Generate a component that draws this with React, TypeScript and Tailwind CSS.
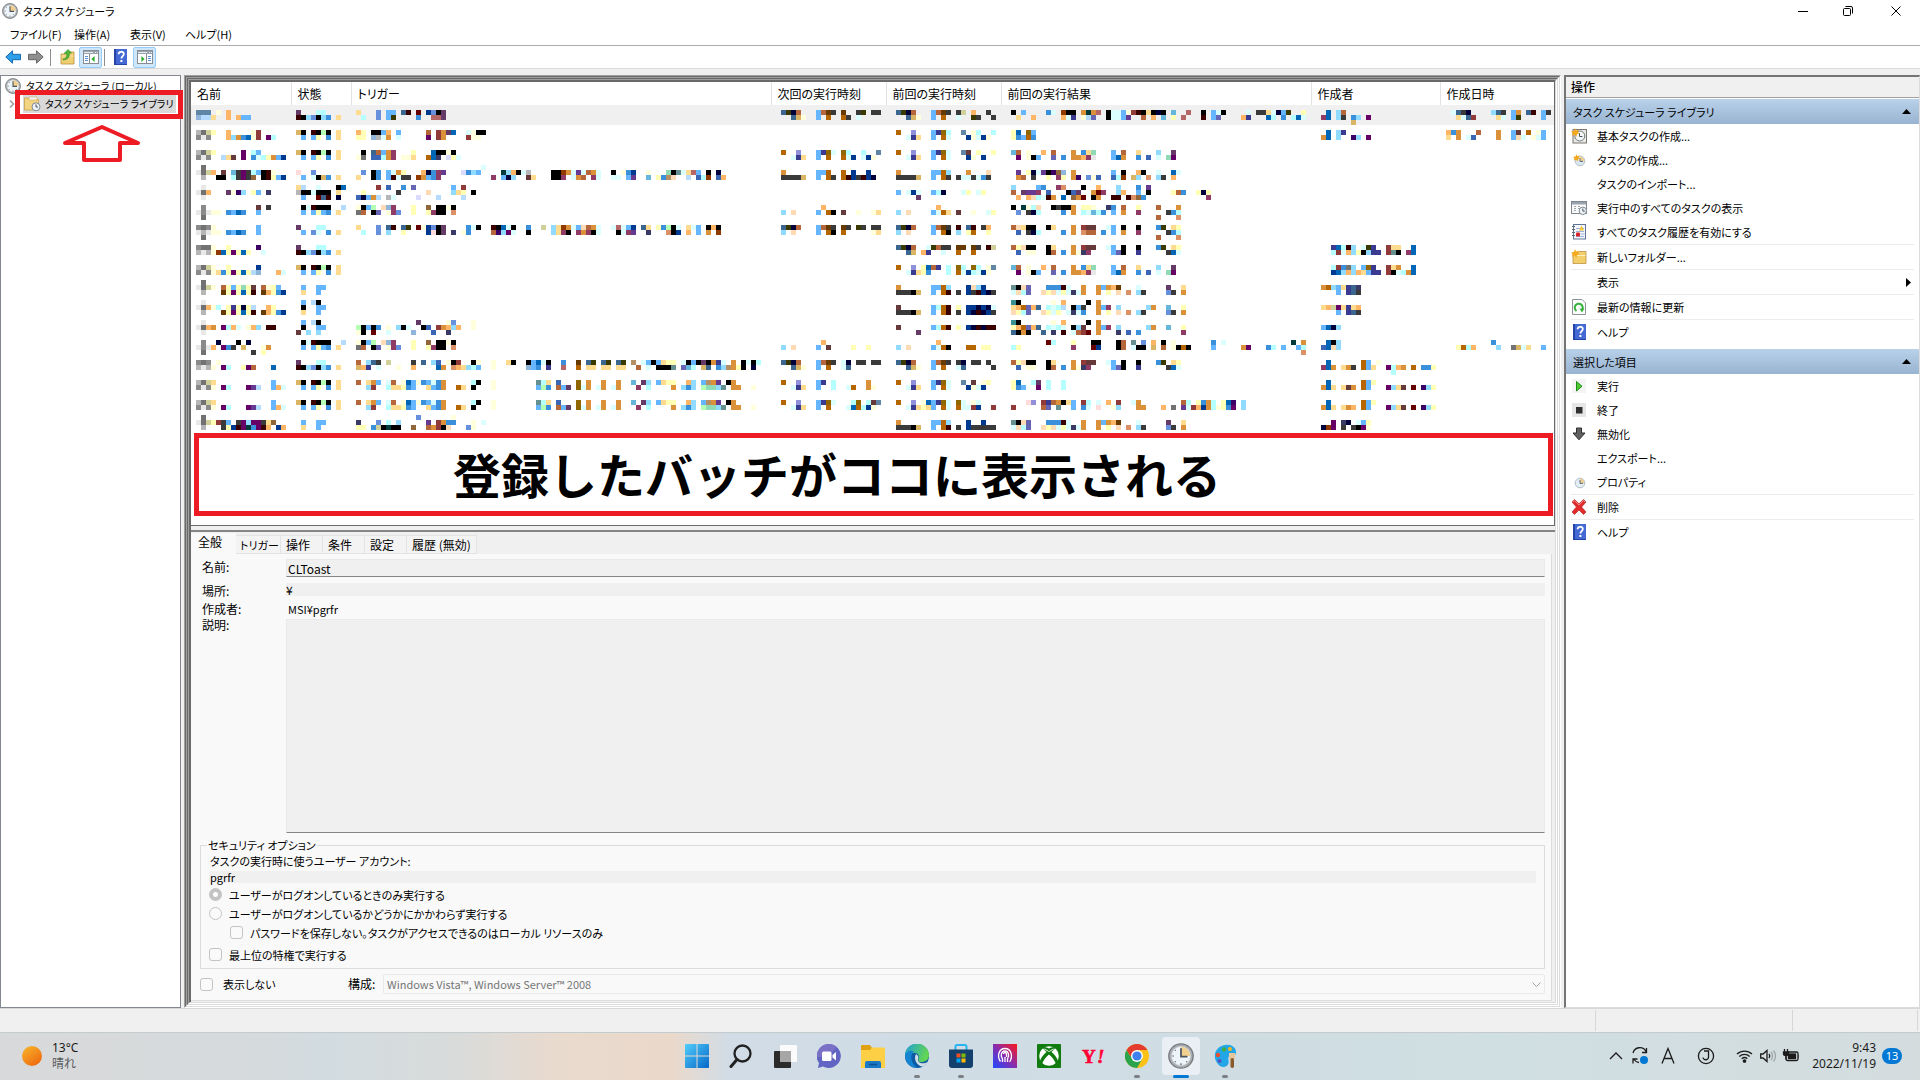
import React from "react";

const PALETTE: Record<string, string> = {
  k: "#000000", d: "#3a3a3a", g: "#727272", m: "#b6b6b6", n: "#8a8a8a", w: "#e8e8e8",
  y: "#ffffb5", l: "#ffffdb", c: "#b5ffff", C: "#dbffff", s: "#66b5ff", S: "#90dbff",
  b: "#3a90db", B: "#0066b5", N: "#003a90", D: "#00003a", t: "#ffdb90", o: "#ffb566",
  O: "#db903a", r: "#b5663a", R: "#903a3a", M: "#3a0000", p: "#660066", P: "#663a66",
  v: "#3a3a90", V: "#9090db", u: "#6690db", U: "#6666b5", h: "#3a66b5", H: "#3a6690",
  q: "#b56600", Q: "#663a00", e: "#90663a", E: "#db9066", f: "#ffdbb5", F: "#b5dbff",
  a: "#903a66", A: "#3a0066", z: "#3a3a66", i: "#003a3a", j: "#b5ffb5", G: "#3a3a00",
  J: "#906600", x: "#663a3a", X: "#660000", Z: "#3a9090", K: "#ffdbdb", L: "#b59066",
  W: "#6085a5", "0": "#663a90", "1": "#669090", "2": "#90dbb5", "3": "#66b5db",
  "4": "#dbb566", "5": "#d0d09a", "6": "#903a00", "7": "#b56666", "8": "#90b5db", "9": "#dbdbff",
};

const CELL = 5;

function Mosaic({ lines }: { lines: string[] }) {
  const cols = Math.max(0, ...lines.map((l) => l.length));
  if (!cols) return null;
  return (
    <svg
      className="block"
      width={cols * CELL}
      height={lines.length * CELL}
      shapeRendering="crispEdges"
      aria-hidden="true"
    >
      {lines.map((line, y) =>
        [...line].map((ch, x) =>
          PALETTE[ch] ? (
            <rect key={`${x}-${y}`} x={x * CELL} y={y * CELL} width={CELL} height={CELL} fill={PALETTE[ch]} />
          ) : null
        )
      )}
    </svg>
  );
}

type Row = {
  short?: boolean;
  cells: string[][];
};

const ST_READY = ["P...cc", "MkSukSb.t"];
const ST_RUN = ["4k.Mkjk.t", ".s.sy.b.t"];
const ST_OFF = ["", ".s..ss", ".t..s"];
const ST_OFF2 = [".s.Fk", ".k..ss", ".t..s"];
const ST_SET = [".kCMkkk..F", ".s.sysb.t"];
const TR_SHORT = ["lksj.f8a...y..e.kklk", "gr.kU.lau..y..yakk.E"];
const TR_LONG = [
  "r.tOs.Cr.lBslbsCbO.....ck..l........1ct.h...J.O..O..O..3.PS.styy..oS.sLO0.kO",
  "..SR..cttybs..tsbO..qt.k...l........sjb.rsP.JCO.CO.CO...a.c....O.SbS.j22S1.OO..l",
];
const RES_A = [
  "3r.l..o.r...O.bt2...s.r..t...S..P",
  ".p.lks..U.b.OOoaw...sBO..b.h.C.2p",
];
const RES_B = [
  "ryfkk..kt...O.Rxx..Cs.k..k...bG.ty",
  ".h.ll..kr.b.Olza....sUk..v.....dBC",
];
const RES_C = [
  "",
  "1kfU...bbbMC..O..OsOoQ...C.....P..t",
  "CfcU..fyfCyCzCO..O.y.f.E.Sd....ud.O",
];

const ROWS: Row[] = [
  {
    cells: [
      ["", "WWW.l.o", "8FFt..o.oss"],
      ["", ...ST_READY],
      ["", "t...u.ss.HM.X.NukP", ".c..u.sG....b..77P"],
      ["", "HGDr...srQd.Q..dG.dd", "..H4l..s.q..qd.C"],
      ["", "HGDr...srQd.d5.o..d", "..H4l..s.q..C..Gd..d"],
      [
        "",
        "k.s....bC.6kk.OiO7.kCCslRMktkDk.3..7..k.sCk....C.ddtCDsG..y",
        ".t..o.....oCv.lFU..kCCs0..r.o.3.y.7...M.sU....ov...Bc.b.cBC",
      ],
      ["", ".B.Sr", "aB.Sd.bS.p", "......4"],
      ["", ".CHdD....SHd.sO.HM.sd", "..tCHR....tC.sG....s"],
    ],
  },
  {
    cells: [
      ["", "mg5y..o....lR", "nwn...oSObBlR.pc"],
      ["", ...ST_RUN],
      ["", "oy.kkso.s.....r.ROPB..Clkk", "yy.8mCO.C.....p.RO....Rll"],
      [],
      ["", "q..V...svJc..W.lc..c", "..Cvt..s.qC...NlCNl"],
      ["", "yB.Js", "ybsqb"],
      ["", ".B.Sv", "OB.S..AS.p"],
      ["", "obO...r...O..sx.q.ls", "t.O.Ch....O..sfC.lCs"],
    ],
  },
  {
    cells: [
      ["", "mg5y.....p.cs", "nwn..Ftx.p.bCcyOsN"],
      ["", ...ST_RUN],
      ["", ".k.HrsOa...y...Bkklk", "lg.hhcOa.llt..qBz.9yC"],
      ["", "q..V...svJC.Jc..c..W", "..Cvt..s.q..qCN.CNl"],
      ["", "q..V...svJC..Wx.y..y", "..Cvt..s.qC...Nl.N"],
      ["", ...RES_A],
      [],
      [],
    ],
  },
  {
    cells: [
      [".g", "wg5o.x.3dpdcskMl", ".m..kk.cdpde.kMysN"],
      ["", "K..u", ".s.Ck4b.t"],
      [
        ".........................C",
        ".u.kb.sCOy...oDba0...9bSs....iSokCm....kk6OC0CrOC..k.lbN..l...2k1Ct7s.k.D",
        "t..kb.sMCdd.6Osba..........a.sDS..xt...kka.COr.aC..CC.s0..3.ybLf..F.hc6.ho",
      ],
      ["", "O......ssq..q.N..N", "dddd4..s.qd.qMNdMND"],
      ["", "O......ssqS...O...f", "dddd4..s.qd.dCCdCbd"],
      ["", ".0.yDC0kAe8.O.......s.k..ok..C..BC", ".Or.d..y.ay.OA.ulh..hc6.4S.E.Sd.o"],
      [],
      [],
    ],
  },
  {
    cells: [
      [".w", "wgo...PlAS.ys.z", ".w"],
      ["tF..C...kB", "mkkCkkk.t", ".s..XHM.D"],
      ["....R.h..b.U.......s.R", ".y......d.....f....Sty.k", "hDsOF.mC....9...F....F"],
      [],
      ["", "s.CNC..scD...Cy.Cy", "....P"],
      ["S....sb..aE...k..o...S...b.0", "r.P00a.h...khP..OXa..So..s.k....yrb..yDy", ".o.ofcCMO.B.eOX.kO..MM.MEeb............a"],
      [],
      [],
    ],
  },
  {
    cells: [
      [".n..........x.d", "wnwll.bsBb..s", ".g"],
      ST_SET,
      TR_SHORT,
      ["........o", "S.f....s.qk.x..l..lt"],
      ["........o", "S.f....sCqt.x..l..Cy"],
      [
        "k.ilcf..kdkkO.yyl..zb.r..y...r...O",
        ".u.dDc....b.O.cC3cb.s.O..a.....dbc",
        ".............................r...E",
      ],
      [],
      [],
    ],
  },
  {
    cells: [
      ["ngnl........s", "wmwll.bsBb..s", ".g"],
      ["P...cc", ".s.uC.b.t"],
      [
        "t...u.HM.HG.XlNukP....bCk..MkBCk..b..5.St6OCsfrOC..C7CsN.Ht.ybjkC.tCs.kok",
        ".c..u.S..y....NKkP.z.lb....rASpC..k....Stak.aOakC...kCa0..z...EkN.o.s.O.6",
      ],
      ["HGDr...srQd.Qd.Gd.dd", "S.f....s.qk.q.....lt"],
      ["HGDr...srQd.M.HM.do", "S.f....s.qk.S.yq..y"],
      [
        "rftkk..kt...O.Rxx..Cs.k..k...bG.ty",
        ".h.dDc....b.O.Err.b.s.O..a.....dbc",
        ".............................r...E",
      ],
      [],
      [],
    ],
  },
  {
    cells: [
      ["nggl..y.....A", "mwml6BypyBy..C"],
      ST_READY,
      [],
      [],
      ["HGDr..CGrdd.QQ.Qd.M5", "..H4.ov..C..q..q"],
      RES_B,
      ["..vBcMS.CGv..Rtt..B", "..cRCoSykSvv.R1k.aB"],
      [],
    ],
  },
  {
    short: true,
    cells: [
      ["mg5l..y.....N", "nwnltbypyByF8...oC"],
      ST_RUN,
      [],
      [],
      ["q..V.yBrv.c.Jc.Jc.lW", "..Cvtyb...c.qCNcCNl"],
      RES_A,
      ["..cRbgS.sJv..RtO..B", "..NBSoSotsvv.RkCcOB"],
      [],
    ],
  },
  {
    cells: [
      [".g", "wg5l.rysy2yx.rlys", ".m...QypyByM.QoybN"],
      ST_OFF,
      [],
      [],
      ["", "O......ssqS...NfSN", "dddk4..s.qM.d.NdMNDd"],
      RES_C,
      ["", "OqSstvHz", "...s.vHd"],
      [],
    ],
  },
  {
    cells: [
      [".w", "wgolc.yvyDyF..oy", ".m...QypyByM.QoybN"],
      ST_OFF2,
      [],
      [],
      ["", "x......scqM.y.NNDNDC", "dddk4..s.qM.d.NDMDNd"],
      [
        "Zk......l.o....k.O",
        "toqUoH.cCcF.ksd..Osa.S.....SO..3..y",
        "fycU..fyCy.CzCb..O.y.f.E.Sd....ud.O",
      ],
      ["", "to5ptvto", "...s.vHd"],
      [],
    ],
  },
  {
    cells: [
      [".w", "wgoO.pcoC.loS.MM", ".w"],
      [".s.Fk", ".k..ss", "x.S.S"],
      ["............P.....lu...l", "jkskb.l.SkC..kh.ROoSo..l", "lk.X..C....8...h..z"],
      [],
      ["", "x......scqM.y.NDMDMM", "....P"],
      [
        "Zk......l.o....k.O",
        "yoqUoH.cCcC.kSx..Osa.S.....SO..3..y",
        "HkOk..H.z.M.CrRX.O...z.h.b........a",
      ],
      ["", "sBDS"],
      [],
    ],
  },
  {
    cells: [
      [".n..D...k.D", "wnwo.pbd.4...lO", ".g.........d.y"],
      ST_SET,
      TR_SHORT,
      ["........o", "S.f....s.x....y..y"],
      ["........o", "S.f....sCqk...qq.yy"],
      [
        ".......Xc...y...kk...kr.1.u.o.k.l.......b.C.............i.O",
        "cy..........a...XN...kr.Ckk.4.r.lkqk....s.....Op...bc.s..sc",
        "..........................................................E",
      ],
      [".BkS", "hBfS"],
      [".........b", "..yqco....S..g4Ct..s"],
    ],
  },
  {
    cells: [
      ["ngn.l", "mwml.pc..ypr...B"],
      ST_READY,
      [
        "r.SHd.5....d.H.Sh.lkR..kl..l..tk..ksBCk..b..Q.HG.HG.HG.L.Cskstyy.CkskPkOvC.O.kCkc",
        "4ov.C...l..o....BO.EotScs..l......8sb.v..7..q.tt.tt.tt..r.C.kkk1.U3c.4H.bSLOyk.D",
      ],
      ["HGDr...srQd.CD.dd.dd", "..H4l..s.q..CH"],
      ["HGDr...srQd.dD.dd.d", "..H4l..s.q..CH.....d"],
      RES_B,
      [".B......qs.l", "aBO.tOd.qst..pcoO.q.bby", "..............c"],
      [],
    ],
  },
  {
    cells: [
      ["mg5t...........s", "nwnl.pc...p0F..soC"],
      ST_RUN,
      TR_LONG,
      ["q..V...sv.c......O", "..Cvt..s..c..Cq..Ol"],
      ["q..V...svJC..W.x.ly", "..Cvt..s.qC...NlCN"],
      ["yB..cP.c..c", "ybs..p.c..c"],
      [".B......qsy", "OBt.txO.qs...pStx.X.ASy"],
      [],
    ],
  },
  {
    short: true,
    cells: [
      ["mg5t...........s", "nwnl.pc...p0F..soC"],
      ST_RUN,
      TR_LONG,
      ["q..V...svJC...cJ.cxW", "..Cvt..s.q...CBqcNl"],
      ["q..V.lBsvJC.JC.lC", "..Cvtyts.qC.qCCRN..R"],
      [
        "...KV.RvrOkts.Rc.C.o.R..CO........rc.ybOc.yBA.S",
        "R.....rU.1..s.bC.K..lS...OO...o.g.0CRoNOclybp.S",
      ],
      [".B......qsy", "OBt.tOo.qs...pStx.X.ASy"],
      [],
    ],
  },
  {
    short: true,
    cells: [
      [".g", "wg5yRds.dpSppdte", ".m...dyNMpibpMo.No"],
      ST_OFF,
      ["............u......l", "z...u.c.S.....0.RObb...l.C", "yy.b5kikk..e..rORkf...ul"],
      [],
      ["", "O......ssqS...N..N", "dddk4..s.qM.d.Nddddd"],
      RES_C,
      ["", "..p.zD.Csy", "D6p.d.dkpl"],
      [],
    ],
  },
];

const COLUMNS = [
  { label: "名前", width: "w-[100px]", pad: "pl-[5px]" },
  { label: "状態", width: "w-[60px]", pad: "pl-[5px]" },
  { label: "トリガー", width: "w-[420px]", pad: "pl-[5px]" },
  { label: "次回の実行時刻", width: "w-[115px]", pad: "pl-[10px]" },
  { label: "前回の実行時刻", width: "w-[115px]", pad: "pl-[10px]" },
  { label: "前回の実行結果", width: "w-[310px]", pad: "pl-[10px]" },
  { label: "作成者", width: "w-[129px]", pad: "pl-[10px]" },
  { label: "作成日時", width: "", pad: "pl-[6px]" },
];

function Clock({ size }: { size: number }) {
  return (
    <svg width={size} height={size} viewBox="0 0 16 16" aria-hidden="true" className="shrink-0">
      <circle cx="8" cy="8" r="7.5" fill="#a9adb1" stroke="#77797c" strokeWidth=".8" />
      <circle cx="8" cy="8" r="5.9" fill="#eef5fa" stroke="#c9ced2" strokeWidth=".5" />
      <path d="M8 8V2.3A5.7 5.7 0 0 1 13.7 8Z" fill="#f1cf8d" />
      <path d="M8 3.2V8.4H12" fill="none" stroke="#4b5560" strokeWidth="1.1" />
      <g fill="#56616b">
        <circle cx="8" cy="13" r=".5" />
        <circle cx="3.1" cy="8" r=".5" />
        <circle cx="4.5" cy="4.5" r=".4" />
        <circle cx="4.5" cy="11.5" r=".4" />
        <circle cx="11.5" cy="11.5" r=".4" />
      </g>
    </svg>
  );
}

function HelpIcon() {
  return (
    <svg width="13" height="16" viewBox="0 0 13 16" aria-hidden="true">
      <rect width="13" height="16" fill="#2444a8" />
      <rect x="2" width="11" height="15" fill="#4468d4" />
      <path d="M4.6 5.2C4.6 2 9.8 2 9.8 5c0 2-2.4 2.2-2.4 4.6" fill="none" stroke="#fff" strokeWidth="1.8" />
      <rect x="6.4" y="11" width="2" height="2" fill="#fff" />
    </svg>
  );
}

function PaneIcon({ flip }: { flip?: boolean }) {
  return (
    <svg width="16" height="14" viewBox="0 0 16 14" aria-hidden="true">
      <rect x=".5" y=".5" width="15" height="13" fill="#fff" stroke="#868d95" />
      <rect x="1" y="1" width="14" height="3" fill="#9aa3ad" />
      <path d="M1 2.5h9M12 2.5h1M14 2.5h1" stroke="#e8edf2" />
      <g transform={flip ? "translate(16 0) scale(-1 1)" : undefined}>
        <path d="M6.5 4v9" stroke="#868d95" />
        <path d="M2 6.5h3M2 8.5h3M2 10.5h3" stroke="#5b8fd0" />
        <path d="M11.6 6v6L8.4 9Z" fill="#2cae2c" />
      </g>
    </svg>
  );
}

function Star() {
  return <path d="M4 0l1 2.6L8 1.6 6.6 4 9 5.6 6 6 5.4 9 3.6 6.6 1 8l.6-3L0 3.6 3 3Z" fill="#f5a81c" />;
}

function FolderUp() {
  return (
    <svg width="15" height="16" viewBox="0 0 15 16" aria-hidden="true">
      <path d="M1 5h5l1-2h7v12H1Z" fill="#f0cf72" stroke="#b98f3a" strokeWidth=".8" />
      <path d="M1.5 7h12" stroke="#fbe7a8" />
      <path d="M3 10C6.5 9.5 7 7 6.6 4.4H4L8 .5 11.6 4H9.4C9.7 8 8 11 3 11Z" fill="#52b53a" stroke="#2d8620" strokeWidth=".5" />
    </svg>
  );
}

function SmallIcon({ name }: { name: string }) {
  switch (name) {
    case "basic":
      return (
        <svg width="16" height="16" viewBox="0 0 16 16" aria-hidden="true">
          <rect x="2" y="1.5" width="13.5" height="13.5" fill="#e9e9e6" stroke="#7d7670" />
          <circle cx="8.8" cy="8" r="5" fill="#f4f6f7" stroke="#707a82" />
          <path d="M8.5 5v3.5h3" fill="none" stroke="#4a5560" />
          <Star />
        </svg>
      );
    case "create":
      return (
        <svg width="16" height="16" viewBox="0 0 16 16" aria-hidden="true">
          <circle cx="9" cy="9" r="4.8" fill="#dbe9f2" stroke="#b3c1cc" />
          <path d="M9 9V4.6A4.4 4.4 0 0 1 13.4 9Z" fill="#efcf92" />
          <path d="M9 6.500V9.400h3" fill="none" stroke="#5a6a78" />
          <g transform="translate(2 2) scale(.85)"><Star /></g>
        </svg>
      );
    case "running":
      return (
        <svg width="16" height="16" viewBox="0 0 16 16" aria-hidden="true">
          <rect x=".5" y="1.5" width="15" height="12" fill="#fafafa" stroke="#7f8790" />
          <rect x="1" y="2" width="14" height="2.5" fill="#98a3af" />
          <path d="M3 6.5h2M7 6.5h2M3 8.5h2M7 8.5h2M3 10.5h2" stroke="#a0a7af" />
          <circle cx="11.8" cy="10.8" r="3.7" fill="#eef4f7" stroke="#808b94" />
          <path d="M11.8 8.5v2.600h2" fill="none" stroke="#4d5862" />
        </svg>
      );
    case "history":
      return (
        <svg width="16" height="16" viewBox="0 0 16 16" aria-hidden="true">
          <rect x="2.5" y=".5" width="12" height="14.5" fill="#f4f6fa" stroke="#5f7597" />
          <path d="M5 4.5h8M5 7.5h8M5 12.5h8M9.500 10h4" stroke="#9db2dc" />
          <path d="M10.500 1.500l2.500 5H8Z" fill="#f2c531" />
          <rect x="5" y="8.500" width="4" height="4" rx="1" fill="#d8232a" />
          <path d="M1 2.5h3M1 5.5h3M1 8.5h3M1 11.5h3" stroke="#5c6775" />
        </svg>
      );
    case "folder":
      return (
        <svg width="16" height="16" viewBox="0 0 16 16" aria-hidden="true">
          <path d="M2 4h5l1-1.500h7V14.500H2Z" fill="#f3cf6b" stroke="#bd9340" strokeWidth=".8" />
          <path d="M2.500 6.500h12" stroke="#fdeebb" />
          <Star />
        </svg>
      );
    case "refresh":
      return (
        <svg width="14" height="16" viewBox="0 0 14 16" aria-hidden="true">
          <path d="M.5.5h9.5L13.5 4v11.500H.5Z" fill="#fcfcfc" stroke="#8e9399" />
          <path d="M4.500 12A4 4 0 1 1 10 11" fill="none" stroke="#36b13c" strokeWidth="2" />
          <path d="M7.500 9.500h5l-2.500 4Z" fill="#36b13c" />
        </svg>
      );
    case "help":
      return <HelpIcon />;
    case "run":
      return (
        <svg width="14" height="14" viewBox="0 0 14 14" aria-hidden="true">
          <rect width="14" height="14" fill="#f4f4f4" />
          <path d="M4.500 2.500v9.500l5.500-4.700Z" fill="#4fca35" stroke="#1d8f14" />
        </svg>
      );
    case "end":
      return (
        <svg width="14" height="14" viewBox="0 0 14 14" aria-hidden="true">
          <rect width="14" height="14" fill="#e6e6e6" />
          <rect x="4" y="4" width="6.500" height="6.500" fill="#2f2f2f" />
        </svg>
      );
    case "disable":
      return (
        <svg width="14" height="14" viewBox="0 0 14 14" aria-hidden="true">
          <path d="M4.500 1h5v5h3.500L7 12.800 1 6h3.500Z" fill="#606060" stroke="#2e2e2e" />
        </svg>
      );
    case "props":
      return (
        <svg width="16" height="16" viewBox="0 0 16 16" aria-hidden="true">
          <circle cx="9" cy="9" r="4.8" fill="#e4eef5" stroke="#b0bec9" />
          <path d="M9 9V4.6A4.4 4.4 0 0 1 13.4 9Z" fill="#efcf92" />
          <path d="M9 6V9.400h3" fill="none" stroke="#5a6a78" />
        </svg>
      );
    case "delete":
      return (
        <svg width="16" height="16" viewBox="0 0 16 16" aria-hidden="true">
          <path d="M1 3l2.500-2.500L8 4.800 12.500.5 15 3l-4.400 5L15 13l-2.500 2.500L8 11l-4.500 4.500L1 13l4.400-5Z" fill="#e22b2b" stroke="#b01c1c" strokeWidth=".6" />
          <path d="M2 3l1.500-1.400L8 6l4.500-4.400L14 3" fill="none" stroke="#f28a8a" />
        </svg>
      );
    default:
      return null;
  }
}

function ActionHeader({ children }: { children: React.ReactNode }) {
  return (
    <div className="flex h-[25px] items-center justify-between bg-linear-to-b from-[#b9d1ea] to-[#99b4d1] pr-2 pl-[7px]">
      <h3>{children}</h3>
      <button type="button" aria-label="折りたたむ">
        <svg width="9" height="5" viewBox="0 0 9 5"><path d="M4.5 0L9 5H0Z" /></svg>
      </button>
    </div>
  );
}

function Action({ icon, label, line, sub }: { icon?: string; label: string; line?: boolean; sub?: boolean }) {
  return (
    <li className={line ? "mx-[5px] border-t border-[#ececec]" : "mx-[5px]"}>
      <button type="button" className="flex h-6 w-full items-center text-left">
        <span className="flex w-4 justify-center">{icon && <SmallIcon name={icon} />}</span>
        <span className="grow pl-[10px]">{label}</span>
        {sub && <svg className="mr-[3px]" width="5" height="9" viewBox="0 0 5 9"><path d="M0 0L5 4.5 0 9Z" /></svg>}
      </button>
    </li>
  );
}

const TASKS: { name: string; state?: "open" | "active"; art: React.ReactNode }[] = [
  {
    name: "スタート",
    art: (
      <>
        <defs>
          <linearGradient id="win" x1="0" y1="0" x2="1" y2="1"><stop stopColor="#52cdfb" /><stop offset="1" stopColor="#0467c8" /></linearGradient>
        </defs>
        <path d="M1 0h10.500v11.500H0V1Q0 0 1 0ZM12.500 0H23q1 0 1 1v10.500H12.500ZM0 12.500h11.500V24H1q-1 0-1-1ZM12.500 12.500H24V23q0 1-1 1H12.500Z" fill="url(#win)" />
      </>
    ),
  },
  {
    name: "検索",
    art: <g fill="none" stroke="#222"><circle cx="13.5" cy="9.5" r="8" strokeWidth="2.3" /><path d="M8 15.500L2 22.500" strokeWidth="3" strokeLinecap="round" /></g>,
  },
  {
    name: "タスク ビュー",
    art: <><rect x="7" y="1" width="17" height="17" rx="1" fill="#fbfbfb" /><rect x="1" y="7" width="17" height="17" rx="1" fill="#2b2b2b" /><rect x="7" y="7" width="11" height="11" fill="#a6a6a6" /></>,
  },
  {
    name: "チャット",
    art: (
      <>
        <path d="M12 0a12 12 0 1 1-6 22.500L1 24l1-5A12 12 0 0 1 12 0Z" fill="#6264c4" />
        <path d="M12 0A12 12 0 0 0 0 13Q10 14 20 3A12 12 0 0 0 12 0Z" fill="#8b78c8" opacity=".6" />
        <rect x="5" y="7.5" width="9.5" height="9.5" rx="1.5" fill="#fff" /><path d="M15.500 11l3.500-3v8.500l-3.500-3Z" fill="#fff" />
      </>
    ),
  },
  {
    name: "エクスプローラー",
    art: (
      <>
        <path d="M1 1h8l2 3v4H0V2Q0 1 1 1Z" fill="#dfa012" />
        <path d="M0 6h9l2-2.500h12q1 0 1 1V24H0Z" fill="#fccf45" />
        <path d="M4 24v-5q0-2 2-2h12q2 0 2 2v5Z" fill="#1a78c6" /><path d="M8 20.500h8" stroke="#0e4e8c" strokeWidth="1.5" />
      </>
    ),
  },
  {
    name: "Microsoft Edge",
    state: "open",
    art: (
      <>
        <defs>
          <linearGradient id="edgeTop" x1="0" y1="0" x2="1" y2=".3"><stop stopColor="#1f9fd6" /><stop offset="1" stopColor="#62d653" /></linearGradient>
        </defs>
        <circle cx="12" cy="12" r="12" fill="#0c59a4" />
        <path d="M0 12a12 12 0 0 1 24-1c0 5-4 7-7.500 7-3 0-3.500-1.500-3-3 1-2 .5-6-4-6C5 9 1 11 0 12Z" fill="url(#edgeTop)" />
        <path d="M0 12C1 7 6 6 9 7.500 5 10 5 19 12.500 23.900A12 12 0 0 1 0 12Z" fill="#1484d0" />
        <path d="M13 15c-1 3 4 6 9.500 3-1 2-3 4-5 4.800C11 21 8.500 15 11 10c2 1 3 3 2 5Z" fill="#d2dee6" />
      </>
    ),
  },
  {
    name: "Microsoft Store",
    state: "open",
    art: (
      <>
        <path d="M6.500 6V2.500Q6.500 1 8 1h8q1.500 0 1.500 1.500V6" fill="none" stroke="#28b4ee" strokeWidth="2" />
        <path d="M0 5.500h24V21q0 3-3 3H3q-3 0-3-3Z" fill="#14406e" />
        <rect x="7.5" y="9.5" width="4" height="4" fill="#f25022" /><rect x="12.5" y="9.5" width="4" height="4" fill="#7fba00" />
        <rect x="7.5" y="14.5" width="4" height="4" fill="#00a4ef" /><rect x="12.5" y="14.5" width="4" height="4" fill="#ffb900" />
      </>
    ),
  },
  {
    name: "MSI Center",
    art: (
      <>
        <defs>
          <linearGradient id="msi" x1="0" y1="1" x2="1" y2="0"><stop stopColor="#1b4bff" /><stop offset=".5" stopColor="#8a2cae" /><stop offset="1" stopColor="#ff1616" /></linearGradient>
        </defs>
        <rect width="24" height="24" fill="url(#msi)" />
        <g fill="none" stroke="#fff" strokeWidth="1.3">
          <path d="M7.500 17.500C3.500 12 6 4.500 12 4.500S20.500 12 16.500 18" /><path d="M9.500 18V15C6.500 11 9 7 12 7s5 4 2.500 8v3" /><path d="M12 18v-5M10.500 10a1.500 1.500 0 1 1 3 0v3" />
        </g>
      </>
    ),
  },
  {
    name: "Xbox",
    art: (
      <>
        <rect width="24" height="24" rx="1" fill="#107c10" /><circle cx="12" cy="12" r="9.8" fill="#fff" />
        <path d="M5 4.500C8 4 10.500 6 12 7.300 13.500 6 16 4 19 4.500L17 3Q14 3 12 4.500 10 3 7 3ZM12 10.500C8 14 5.500 17.500 5 20.500L2.500 18C4 13.500 7 10 9.500 8L6 4.500 12 8l6-3.500L14.500 8c2.500 2 5.500 5.500 7 10L19 20.500c-.5-3-3-6.500-7-10Z" fill="#107c10" />
      </>
    ),
  },
  {
    name: "Yahoo!",
    art: (
      <g fill="#ff0033" fontFamily="Liberation Serif, serif" fontWeight="bold" stroke="#ff0033" strokeWidth=".6">
        <text x="1" y="19" fontSize="19">Y</text>
        <text x="16" y="19" fontSize="19" fontStyle="italic">!</text>
      </g>
    ),
  },
  {
    name: "Google Chrome",
    state: "open",
    art: (
      <>
        <circle cx="12" cy="12" r="12" fill="#fbc116" />
        <path d="M1.600 6A12 12 0 0 1 22.400 6H12L7 15Z" fill="#e33b2e" />
        <path d="M1.600 6A12 12 0 0 0 12 24l5.200-9L12 12H5Z" fill="#2ba24c" />
        <circle cx="12" cy="12" r="6" fill="#fff" /><circle cx="12" cy="12" r="4.6" fill="#3f7fee" />
      </>
    ),
  },
  { name: "タスク スケジューラ", state: "active", art: null },
  {
    name: "ペイント",
    state: "open",
    art: (
      <>
        <path d="M12 1C19 0 23.500 4 23 9c-.5 3-4 3-6.500 3.500-3 1 .5 5-1.500 8C12 25 6 23 3.500 18-1 10 4 2 12 1Z" fill="#22a6e8" />
        <circle cx="5" cy="11" r="2.2" fill="#e8502e" /><circle cx="11" cy="5.5" r="2.2" fill="#3fae49" /><circle cx="17" cy="5" r="2" fill="#f3b61d" /><circle cx="6.500" cy="17" r="2" fill="#5c4fc0" />
        <path d="M16 9h6v6h-6Z" fill="#e6c69b" /><rect x="17.500" y="14" width="3.500" height="10" rx="1.700" fill="#8a5a2b" />
      </>
    ),
  },
];

const TABS = ["トリガー", "操作", "条件", "設定", "履歴 (無効)"];

function Bevel({ children }: { children: React.ReactNode }) {
  return (
    <div className="flex min-h-0 min-w-0 flex-1 border border-t-[#a0a0a0] border-r-white border-b-white border-l-[#a0a0a0]">
      <div className="flex min-h-0 min-w-0 flex-1 border border-t-[#696969] border-r-[#dcdcdc] border-b-[#dcdcdc] border-l-[#696969]">
        {children}
      </div>
    </div>
  );
}

const CHECK = "size-[13px] shrink-0 appearance-none rounded-[3px] border border-[#c3c3c3] bg-[#fafafa]";
const RADIO = "size-[13px] shrink-0 appearance-none rounded-full border border-[#c3c3c3] bg-[#fafafa] checked:border-4 checked:bg-white";

function TaskList() {
  return (
    <section className="shrink-0 border-r border-b border-[#696969] bg-white">
      <table className="w-full table-fixed border-collapse">
        <thead>
          <tr className="h-[23px]">
            {COLUMNS.map((c, i) => (
              <th
                key={c.label}
                className={`${c.width} pl-[6px] text-left font-normal ${i < 7 ? "border-r border-[#e2e2e2]" : ""}`}
              >
                {c.label}
              </th>
            ))}
          </tr>
        </thead>
        <tbody>
          {ROWS.map((row, r) => (
            <tr key={r} className={`${row.short ? "h-[15px]" : "h-5"} ${r === 0 ? "bg-[#f0f0f0]" : ""}`}>
              {row.cells.map((lines, c) => (
                <td key={c} className={`${COLUMNS[c].pad} py-0 pr-0 align-top`}>
                  <Mosaic lines={lines} />
                </td>
              ))}
            </tr>
          ))}
        </tbody>
      </table>
      <div className="mt-[3px] mr-px mb-[9px] ml-[3px] flex h-[83px] items-center border-[5px] border-[#ed1c24] pb-1 pl-[254px] text-[48px] leading-none font-bold [font-feature-settings:normal]">
        登録したバッチがココに表示される
      </div>
    </section>
  );
}

function Details() {
  return (
    <section className="mt-1 flex min-h-0 flex-1 flex-col border-t-2 border-[#858585] bg-[#f0f0f0]">
      <div className="flex h-[22px] items-end pt-[1px]" role="tablist">
        <button type="button" role="tab" aria-selected="true" className="h-full w-[45px] bg-[#f9f9f9] pb-1 pl-[7px] text-left">
          全般
        </button>
        {TABS.map((t) => (
          <button
            key={t}
            type="button"
            role="tab"
            aria-selected="false"
            className={`h-[19px] border border-l-0 border-[#e3e3e3] bg-[#f3f3f3] text-left whitespace-nowrap ${
              t.length > 5 ? "w-[70px] pl-[5px]" : t.length > 2 ? "w-[45px] pl-[4px] text-[11px]" : "w-[42px] pl-[5px]"
            }`}
          >
            {t}
          </button>
        ))}
      </div>
      <div className="mr-[3px] mb-[1px] flex min-h-0 flex-1 flex-col border-r border-b border-[#dcdcdc] bg-[#f9f9f9] pr-[6px] pb-[6px] pl-[9px]">
        <div className="grid min-h-0 flex-1 grid-cols-[86px_1fr] grid-rows-[24px_20px_16px_1fr] pt-[3px]">
          <label htmlFor="name" className="pt-[2px] pl-[2px]">名前:</label>
          <input id="name" readOnly defaultValue="CLToast" className="mt-[2px] h-[18px] w-full border border-[#e9e9e9] border-b-[#858585] bg-[#f0f0f0] px-[1px] outline-none" />
          <span className="pt-[2px] pl-[2px]">場所:</span>
          <span className="mt-[2px] h-[13px] bg-[#f0f0f0] leading-[13px]">¥</span>
          <span className="pl-[2px]">作成者:</span>
          <span className="pl-[2px] text-[11px]">MSI¥pgrfr</span>
          <label htmlFor="desc" className="pl-[2px]">説明:</label>
          <textarea id="desc" readOnly className="mt-[2px] h-full min-h-0 w-full resize-none border border-[#e9e9e9] border-b-[#858585] bg-[#f0f0f0] outline-none" />
        </div>
        <fieldset className="mt-[6px] min-w-0 border border-[#dcdcdc] px-[8px] pb-[1px] text-[11px]">
          <legend className="-ml-[2px] px-[1px]">セキュリティ オプション</legend>
          <div className="mb-[2px] pl-[1px]">タスクの実行時に使うユーザー アカウント:</div>
          <div className="mb-[2px] h-3 bg-[#f0f0f0] pl-[1px] leading-3">pgrfr</div>
          <label className="flex h-[19px] items-center gap-[7px]">
            <input type="radio" name="logon" defaultChecked className={RADIO} />
            ユーザーがログオンしているときのみ実行する
          </label>
          <label className="flex h-[19px] items-center gap-[7px]">
            <input type="radio" name="logon" className={RADIO} />
            ユーザーがログオンしているかどうかにかかわらず実行する
          </label>
          <label className="flex h-[19px] items-center gap-[7px] pl-[21px]">
            <input type="checkbox" className={CHECK} />
            パスワードを保存しない。タスクがアクセスできるのはローカル リソースのみ
          </label>
          <label className="flex h-[25px] items-center gap-[7px]">
            <input type="checkbox" className={CHECK} />
            最上位の特権で実行する
          </label>
        </fieldset>
        <div className="mt-[5px] flex h-5 items-center">
          <label className="flex w-[148px] items-center gap-[10px] text-[11px]">
            <input type="checkbox" className={CHECK} />
            表示しない
          </label>
          <label htmlFor="conf" className="w-[35px]">構成:</label>
          <span className="relative h-full grow">
            <select id="conf" disabled className="h-full w-full appearance-none rounded-[2px] border border-[#e9e9e9] pl-[3px] text-[11px] text-[#767676] opacity-100">
              <option>Windows Vista™, Windows Server™ 2008</option>
            </select>
            <svg className="absolute top-2 right-1" width="9" height="5" viewBox="0 0 9 5" fill="none" stroke="#a5a5a5"><path d="M.5.5l4 4 4-4" /></svg>
          </span>
        </div>
      </div>
    </section>
  );
}

export default function App() {
  return (
    <div
      lang="ja"
      className="flex h-screen flex-col bg-[#f0f0f0] text-[12px] leading-4 text-black [font-family:'Noto_Sans_CJK_JP',sans-serif] [font-feature-settings:'palt']"
    >
      <header className="bg-white">
        <div className="flex h-[22px] items-center pl-[2px]">
          <Clock size={16} />
          <h1 className="grow pl-[5px] text-[11px]">タスク スケジューラ</h1>
          <button type="button" aria-label="最小化" className="flex w-[45px] justify-center">
            <svg width="10" height="10" stroke="#000" fill="none"><path d="M0 5.500h10" /></svg>
          </button>
          <button type="button" aria-label="元に戻す" className="flex w-[46px] justify-center">
            <svg width="10" height="10" stroke="#000" fill="none"><rect x=".5" y="2.500" width="7" height="7" rx="1" /><path d="M2.500.5H8q1.500 0 1.500 1.500v5.500" /></svg>
          </button>
          <button type="button" aria-label="閉じる" className="flex w-[49px] justify-center">
            <svg width="10" height="10" stroke="#000"><path d="M.5.5l9 9M9.500.5l-9 9" /></svg>
          </button>
        </div>
        <nav className="flex h-6 items-center border-b border-[#a9abb0] pl-[10px] text-[11px]">
          <button type="button" className="w-16 text-left">ファイル(F)</button>
          <button type="button" className="w-14 text-left">操作(A)</button>
          <button type="button" className="w-[55px] text-left">表示(V)</button>
          <button type="button" className="text-left">ヘルプ(H)</button>
        </nav>
        <div className="flex h-[23px] items-center border-b border-[#dadada] pl-[5px]">
          <button type="button" aria-label="戻る" className="w-[23px]">
            <svg width="16" height="14" viewBox="0 0 16 14"><path d="M.8 7L7.500.8v3.500h8v5.400h-8v3.500Z" fill="#2f9fe8" stroke="#1668b0" /></svg>
          </button>
          <button type="button" aria-label="進む" className="w-[22px]">
            <svg width="16" height="14" viewBox="0 0 16 14"><path d="M15.200 7L8.500.8v3.500h-8v5.400h8v3.500Z" fill="#8f8f8f" stroke="#666" /></svg>
          </button>
          <span className="h-[17px] w-px bg-[#8d8d8d]" />
          <button type="button" aria-label="上へ" className="ml-[9px] w-[19px]"><FolderUp /></button>
          <button type="button" aria-label="コンソール ツリー" className="flex h-[21px] w-[23px] items-center justify-center rounded-[2px] border border-[#99cdf5] bg-[#cde6f9]">
            <PaneIcon />
          </button>
          <span className="ml-[2px] h-[17px] w-px bg-[#8d8d8d]" />
          <button type="button" aria-label="ヘルプ" className="ml-[9px] w-[19px]"><HelpIcon /></button>
          <button type="button" aria-label="操作ウィンドウ" className="flex h-[21px] w-[23px] items-center justify-center rounded-[2px] border border-[#99cdf5] bg-[#cde6f9]">
            <PaneIcon flip />
          </button>
        </div>
      </header>

      <main className="flex min-h-0 flex-1 pt-[6px]">
        <nav className="relative w-[181px] shrink-0 border border-[#828790] bg-white text-[10px]" aria-label="コンソール ツリー">
          <div className="flex h-[19px] items-center gap-[5px] pl-[4px] whitespace-nowrap">
            <Clock size={16} />
            タスク スケジューラ (ローカル)
          </div>
          <div className="flex h-[18px] items-center pl-[8px] whitespace-nowrap">
            <svg width="6" height="8" viewBox="0 0 6 8" fill="none" stroke="#9a9a9a" strokeWidth="1.5"><path d="M1 .5L4.500 4 1 7.500" /></svg>
            <span className="ml-[8px] flex h-full w-[153px] items-center gap-[4px] bg-[#d9d9d9] pl-[1px]">
              <svg width="17" height="16" viewBox="0 0 17 16" aria-hidden="true" className="shrink-0">
                <path d="M.5 2h4l1 1.500h9V14H.5Z" fill="#f3d480" stroke="#c9a24c" strokeWidth=".8" />
                <path d="M5 1h8v3H5Z" fill="#f3f3f3" stroke="#c9a24c" strokeWidth=".5" />
                <circle cx="12" cy="10.800" r="4" fill="#eef4f7" stroke="#808b94" />
                <path d="M12 8.300v2.700h2" fill="none" stroke="#4d5862" />
              </svg>
              タスク スケジューラ ライブラリ
            </span>
          </div>
          <div className="absolute top-[14px] left-[14px] h-[29px] w-[168px] border-[5px] border-[#ed1c24]" />
          <svg className="absolute top-[48px] left-[61px]" width="80" height="40" viewBox="0 0 80 40" fill="none" stroke="#ed1c24" strokeWidth="4" strokeLinejoin="round">
            <path d="M40 3L76 19H58V36H22V19H3Z" />
          </svg>
        </nav>

        <div className="ml-[3px] flex min-w-0 flex-1">
          <Bevel>
            <Bevel>
              <Bevel>
                <div className="flex min-w-0 flex-1 flex-col border-t border-l border-[#696969]">
                  <TaskList />
                  <Details />
                </div>
              </Bevel>
            </Bevel>
          </Bevel>
        </div>

        <aside className="ml-[3px] w-[356px] shrink-0 border-t-2 border-r border-b border-l-2 border-t-[#757575] border-r-[#dcdcdc] border-b-[#dcdcdc] border-l-[#757575] bg-white text-[11px]">
          <h2 className="mb-[1px] h-[21px] border-b border-[#a0a0a0] bg-[#f0f0f0] pt-[2px] pl-[5px] text-[12px] font-medium">操作</h2>
          <ActionHeader>タスク スケジューラ ライブラリ</ActionHeader>
          <ul className="mb-[5px]">
            <Action icon="basic" label="基本タスクの作成..." />
            <Action icon="create" label="タスクの作成..." />
            <Action label="タスクのインポート..." />
            <Action icon="running" label="実行中のすべてのタスクの表示" />
            <Action icon="history" label="すべてのタスク履歴を有効にする" />
            <Action icon="folder" label="新しいフォルダー..." line />
            <Action label="表示" line sub />
            <Action icon="refresh" label="最新の情報に更新" line />
            <Action icon="help" label="ヘルプ" line />
          </ul>
          <ActionHeader>選択した項目</ActionHeader>
          <ul>
            <Action icon="run" label="実行" />
            <Action icon="end" label="終了" />
            <Action icon="disable" label="無効化" />
            <Action label="エクスポート..." />
            <Action icon="props" label="プロパティ" />
            <Action icon="delete" label="削除" line />
            <Action icon="help" label="ヘルプ" line />
          </ul>
        </aside>
      </main>

      <div className="flex h-6 justify-end border-t border-[#d7d7d7] pt-[1px] pr-[2px] pb-[1px]" role="status">
        <span className="w-[197px] border-l border-[#d7d7d7]" />
        <span className="w-[126px] border-x border-[#d7d7d7]" />
      </div>

      <footer className="grid h-12 shrink-0 grid-cols-[1fr_auto_1fr] items-center border-t border-[#c3cbce] bg-[linear-gradient(90deg,#d8d9da_0%,#d6dadc_13%,#d2dce0_17%,#d9dbda_24%,#e9dace_29%,#ead9cb_35%,#d1dce6_38%,#cfdde3_65%,#d0dfe2_78%,#d4dcde_100%)] pb-[2px] [font-family:'Noto_Sans','Noto_Sans_CJK_JP',sans-serif]">
        <div className="flex items-center gap-[10px] pl-[22px]">
          <svg width="20" height="20" aria-hidden="true">
            <defs><linearGradient id="sun" x1="0" y1="0" x2=".7" y2="1"><stop stopColor="#f6b92c" /><stop offset="1" stopColor="#f06a10" /></linearGradient></defs>
            <circle cx="10" cy="10" r="10" fill="url(#sun)" />
          </svg>
          <div className="text-[12px] leading-4 text-[#1c1c1c]">
            <div>13°C</div>
            <div className="text-[#5a5c5e]">晴れ</div>
          </div>
        </div>
        <nav className="flex pl-[2px]">
          {TASKS.map((t) => (
            <button key={t.name} type="button" aria-label={t.name} className="relative flex size-11 items-center justify-center">
              {t.state === "active" && <span className="absolute inset-x-[3px] inset-y-[3px] rounded-[4px] bg-[#e9eff5]" />}
              <span className="relative">
                {t.state === "active" ? <Clock size={26} /> : <svg width="24" height="24" viewBox="0 0 24 24">{t.art}</svg>}
              </span>
              {t.state && (
                <span className={`absolute bottom-0 h-[3px] rounded-full ${t.state === "active" ? "w-4 bg-[#0078d4]" : "w-[6px] bg-[#7b8084]"}`} />
              )}
            </button>
          ))}
        </nav>
        <div className="flex items-center justify-end pr-[18px]">
          <svg width="190" height="24" viewBox="0 0 190 24" fill="none" stroke="#1c1c1c" strokeWidth="1.3" className="mr-[13px]" aria-hidden="true">
            <path d="M1 15l6-6 6 6" />
            <path d="M24 9a7 7 0 0 1 13-1.500M37.500 4v4.500H33M30 18.500a7 7 0 0 1-5-3M24 19.500v-4.500h4.500" />
            <circle cx="35" cy="16" r="4" fill="#0078d4" stroke="none" />
            <path d="M53 19.500L59 4.500l6 15M55 14.500h8" />
            <circle cx="97" cy="12" r="7.6" /><path d="M95 7h4.500v6.500a2.800 2.800 0 0 1-5.500 0" />
            <g transform="translate(127 3)"><path d="M1 7a11 11 0 0 1 15 0M3.300 9.500a7.500 7.500 0 0 1 10.400 0M5.700 11.800a4.200 4.200 0 0 1 5.600 0" /><circle cx="8.5" cy="14" r="1.2" fill="#1c1c1c" /></g>
            <g transform="translate(151 4)"><path d="M.7 6H3l4-3.500v11L3 10H.7Z" /><path d="M9 6q1.500 2 0 4" /><path d="M11 4q3 4 0 8M13.500 2.500q4 5.500 0 11" stroke="#9fa6aa" /></g>
            <g transform="translate(174 4)"><rect x="3" y="4" width="12" height="8.5" rx="1.5" /><rect x="5.5" y="6" width="7" height="4.5" fill="#1c1c1c" /><path d="M16.200 7v3" /><path d="M1.500 1v3M4.500 1v3M.5 4h5v2q0 1.500-2.500 1.500T.5 6ZM3 7.500v4" fill="#1c1c1c" /></g>
          </svg>
          <div className="text-right text-[12px] leading-4 text-[#1c1c1c]">
            <div>9:43</div>
            <div>2022/11/19</div>
          </div>
          <span className="ml-[6px] flex h-4 w-5 items-center justify-center rounded-full bg-[#0078d4] text-[11px] text-white">13</span>
        </div>
      </footer>
    </div>
  );
}
